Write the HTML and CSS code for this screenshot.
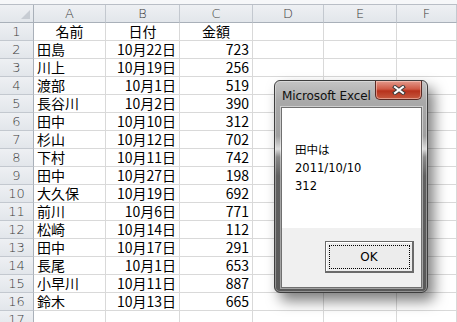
FILE: index.html
```html
<!doctype html>
<html lang="ja">
<head>
    <meta charset="UTF-8">
    <title>Excel</title>
    <link rel="stylesheet" href="styles.css">
</head>
<body>
<div class="topbar"></div>
<!--ワークシート-->
<div class="sheet">
    <div class="hd corner"></div>
    <div class="hd col">A</div>
    <div class="hd col">B</div>
    <div class="hd col">C</div>
    <div class="hd col">D</div>
    <div class="hd col">E</div>
    <div class="hd col">F</div>

    <div class="hd num">1</div>
    <div class="c mid">名前</div><div class="c mid">日付</div><div class="c mid">金額</div><div class="c"></div><div class="c"></div><div class="c"></div>
    <div class="hd num">2</div>
    <div class="c">田島</div><div class="c r">10月22日</div><div class="c r">723</div><div class="c"></div><div class="c"></div><div class="c"></div>
    <div class="hd num">3</div>
    <div class="c">川上</div><div class="c r">10月19日</div><div class="c r">256</div><div class="c"></div><div class="c"></div><div class="c"></div>
    <div class="hd num">4</div>
    <div class="c">渡部</div><div class="c r">10月1日</div><div class="c r">519</div><div class="c"></div><div class="c"></div><div class="c"></div>
    <div class="hd num">5</div>
    <div class="c">長谷川</div><div class="c r">10月2日</div><div class="c r">390</div><div class="c"></div><div class="c"></div><div class="c"></div>
    <div class="hd num">6</div>
    <div class="c">田中</div><div class="c r">10月10日</div><div class="c r">312</div><div class="c"></div><div class="c"></div><div class="c"></div>
    <div class="hd num">7</div>
    <div class="c">杉山</div><div class="c r">10月12日</div><div class="c r">702</div><div class="c"></div><div class="c"></div><div class="c"></div>
    <div class="hd num">8</div>
    <div class="c">下村</div><div class="c r">10月11日</div><div class="c r">742</div><div class="c"></div><div class="c"></div><div class="c"></div>
    <div class="hd num">9</div>
    <div class="c">田中</div><div class="c r">10月27日</div><div class="c r">198</div><div class="c"></div><div class="c"></div><div class="c"></div>
    <div class="hd num">10</div>
    <div class="c">大久保</div><div class="c r">10月19日</div><div class="c r">692</div><div class="c"></div><div class="c"></div><div class="c"></div>
    <div class="hd num">11</div>
    <div class="c">前川</div><div class="c r">10月6日</div><div class="c r">771</div><div class="c"></div><div class="c"></div><div class="c"></div>
    <div class="hd num">12</div>
    <div class="c">松崎</div><div class="c r">10月14日</div><div class="c r">112</div><div class="c"></div><div class="c"></div><div class="c"></div>
    <div class="hd num">13</div>
    <div class="c">田中</div><div class="c r">10月17日</div><div class="c r">291</div><div class="c"></div><div class="c"></div><div class="c"></div>
    <div class="hd num">14</div>
    <div class="c">長尾</div><div class="c r">10月1日</div><div class="c r">653</div><div class="c"></div><div class="c"></div><div class="c"></div>
    <div class="hd num">15</div>
    <div class="c">小早川</div><div class="c r">10月11日</div><div class="c r">887</div><div class="c"></div><div class="c"></div><div class="c"></div>
    <div class="hd num">16</div>
    <div class="c">鈴木</div><div class="c r">10月13日</div><div class="c r">665</div><div class="c"></div><div class="c"></div><div class="c"></div>
    <div class="hd num">17</div>
    <div class="c"></div><div class="c"></div><div class="c"></div><div class="c"></div><div class="c"></div><div class="c"></div>
</div>

<!--メッセージボックス-->
<div class="msgbox">
    <div class="titlebar">
        <span class="title">Microsoft Excel</span>
        <span class="close">
            <svg width="14" height="10" viewBox="0 0 14 10">
                <path d="M3 2 L11 8 M11 2 L3 8" stroke="#3c3c3c" stroke-width="4" stroke-linecap="square"/>
                <path d="M3 2 L11 8 M11 2 L3 8" stroke="#ffffff" stroke-width="2" stroke-linecap="square"/>
            </svg>
        </span>
    </div>
    <div class="client">
        <div class="message">
            <p>田中は</p>
            <p>2011/10/10</p>
            <p>312</p>
        </div>
        <div class="buttons">
            <span class="ok">OK</span>
        </div>
    </div>
</div>
</body>
</html>
```

FILE: styles.css
```css
* {
    margin: 0;
    padding: 0;
    box-sizing: border-box;
}

body {
    width: 457px;
    height: 322px;
    overflow: hidden;
    background-color: #ffffff;
    position: relative;
    font-family: "Noto Sans CJK JP", "Liberation Sans", sans-serif;
}

.topbar {
    height: 5px;
    background-color: #f6f7f9;
    border-bottom: 1px solid #b9bec6;
}

.sheet {
    display: grid;
    grid-template-columns: 34px 72px 74px 73px 71px 73px 60px;
    grid-auto-rows: 18px;
}

.hd {
    background: linear-gradient(#eef0f3, #e2e6eb);
    border-right: 1px solid #c3c8cf;
    border-bottom: 1px solid #c3c8cf;
    font-family: "DejaVu Sans", "Liberation Sans", sans-serif;
    font-size: 13px;
    font-weight: 300;
    color: #3b3b3b;
    text-align: center;
    line-height: 17px;
}

.num {
    border-right-color: #a9b0b9;
}

.corner {
    position: relative;
    border-right-color: #a9b0b9;
    border-bottom-color: #a9b0b9;
}

.corner::after {
    content: "";
    position: absolute;
    right: 3px;
    bottom: 3px;
    border-left: 9px solid transparent;
    border-bottom: 9px solid #c7ccd3;
}

.col {
    border-bottom-color: #a9b0b9;
}

.c {
    border-right: 1px solid #d9d9d9;
    border-bottom: 1px solid #d9d9d9;
    font-size: 14px;
    line-height: 17px;
    color: #000000;
    padding: 0 3px;
    white-space: nowrap;
}

.mid {
    text-align: center;
}

.r {
    text-align: right;
}

/* ダイアログ */
.msgbox {
    position: absolute;
    left: 274px;
    top: 80px;
    width: 154px;
    height: 213px;
    border: 1px solid #3e3e3e;
    border-radius: 6px;
    background: linear-gradient(#c4c4c4 0, #a9a9a9 20px, #9f9f9f 55px, #dcdcdc 68px, #8a8a8a 76px, #606060 95px, #595959 100%);
    box-shadow: 6px 8px 14px rgba(0, 0, 0, 0.5), inset 0 0 0 1px rgba(255, 255, 255, 0.35);
    display: flex;
    flex-direction: column;
}

.titlebar {
    height: 26px;
    display: flex;
    justify-content: space-between;
    align-items: flex-start;
    padding: 0 5px 0 7px;
}

.title {
    font-family: "DejaVu Sans", "Liberation Sans", sans-serif;
    font-size: 12px;
    color: #101010;
    line-height: 14px;
    margin-top: 8px;
    letter-spacing: -0.1px;
}

.close {
    width: 47px;
    height: 19px;
    border: 1px solid #5a2a24;
    border-top: none;
    border-radius: 0 0 5px 5px;
    background: linear-gradient(#e39a8c 0, #cf5a45 45%, #b7321c 55%, #c65a40 100%);
    box-shadow: inset 0 0 0 1px rgba(255, 220, 210, 0.5);
    display: flex;
    justify-content: center;
    align-items: center;
}

.client {
    width: 141px;
    height: 181px;
    margin-left: 6px;
    border: 1px solid #707070;
    box-shadow: 0 0 0 1px rgba(255, 255, 255, 0.45);
    display: flex;
    flex-direction: column;
}

.message {
    height: 120px;
    background-color: #ffffff;
    padding: 33px 0 0 13px;
    font-family: "DejaVu Sans", "Noto Sans CJK JP", sans-serif;
    font-size: 11.5px;
    line-height: 18px;
    color: #000000;
}

.buttons {
    flex: 1;
    background-color: #f0f0f0;
    display: flex;
    justify-content: flex-end;
    align-items: flex-start;
    padding: 13px 7px 0 0;
}

.ok {
    width: 89px;
    height: 32px;
    border: 1px solid #6b6b6b;
    border-right-width: 2px;
    border-bottom-width: 2px;
    background-color: #ececec;
    box-shadow: inset 1px 1px #ffffff;
    font-family: "DejaVu Sans", "Liberation Sans", sans-serif;
    font-size: 12px;
    color: #000000;
    display: flex;
    justify-content: center;
    align-items: center;
    position: relative;
}

.ok::after {
    content: "";
    position: absolute;
    left: 3px;
    top: 3px;
    right: 2px;
    bottom: 2px;
    border: 1px dotted #000000;
}
```
